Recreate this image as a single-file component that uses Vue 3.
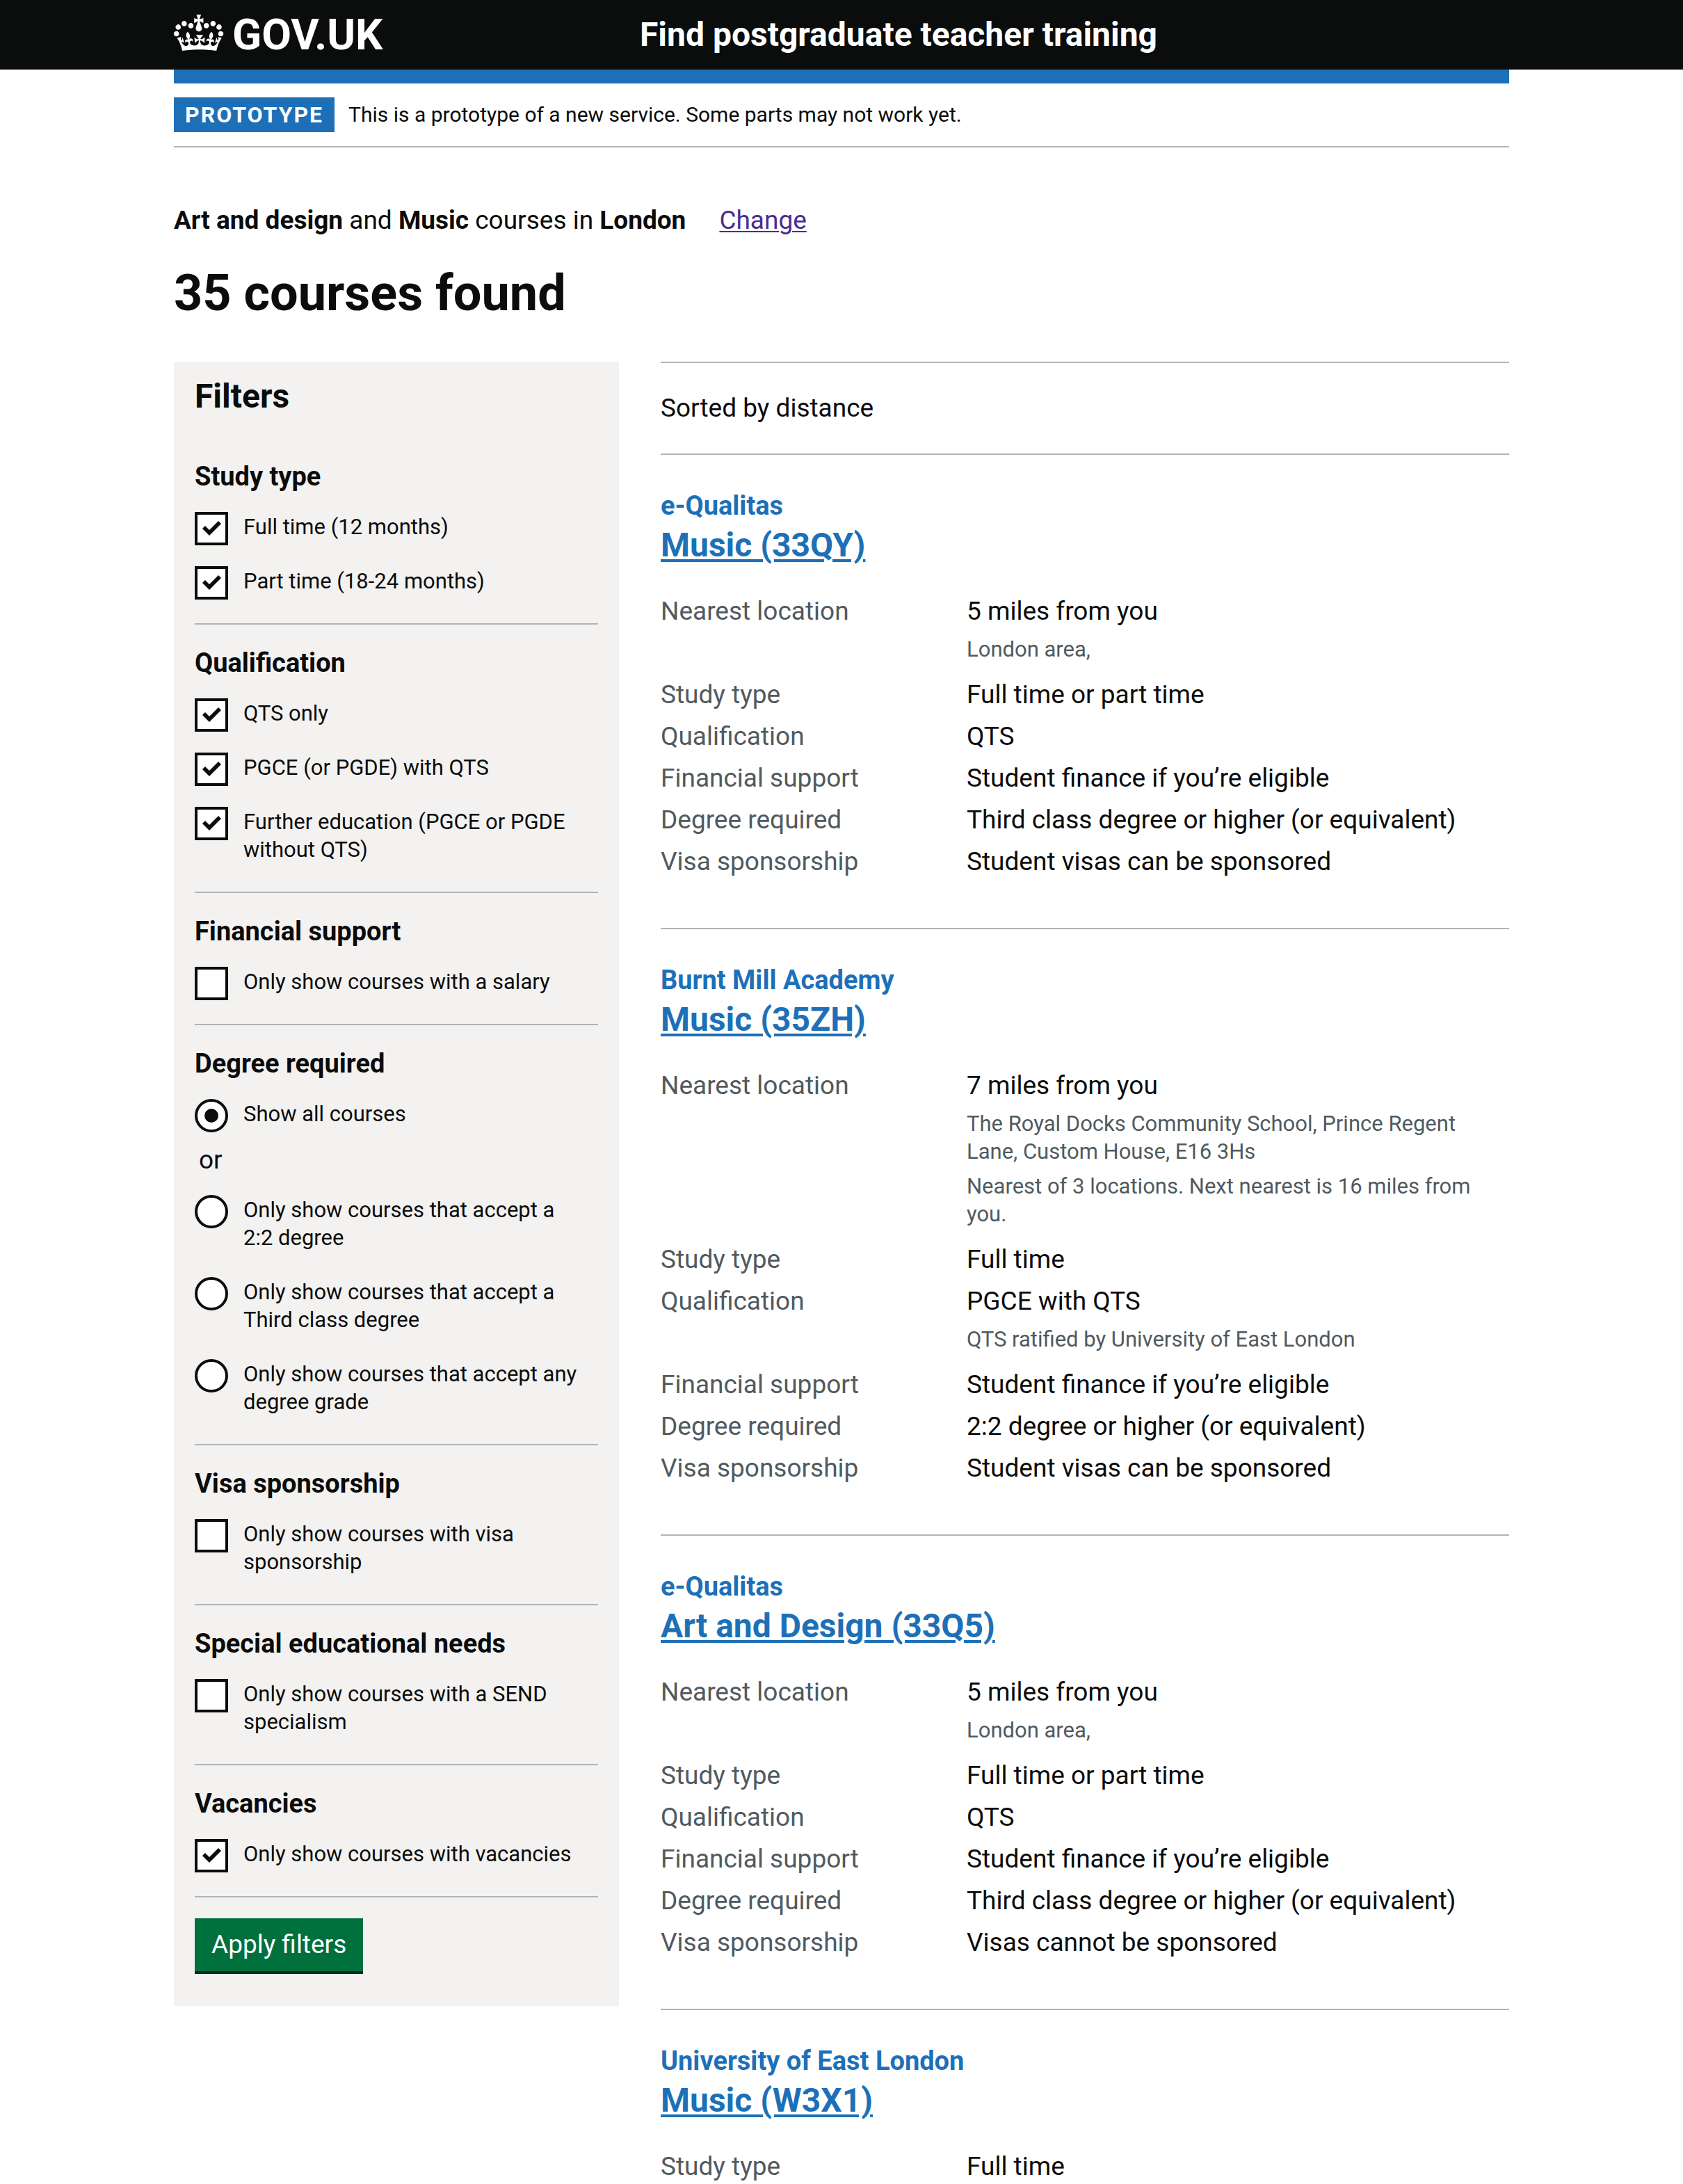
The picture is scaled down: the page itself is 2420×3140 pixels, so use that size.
<script setup>
import { reactive, ref } from 'vue'

const degree = ref('all')

const filters = reactive([
  {
    title: 'Study type',
    type: 'checkbox',
    options: [
      { id: 'full-time', label: 'Full time (12 months)', checked: true },
      { id: 'part-time', label: 'Part time (18-24 months)', checked: true }
    ]
  },
  {
    title: 'Qualification',
    type: 'checkbox',
    options: [
      { id: 'qts', label: 'QTS only', checked: true },
      { id: 'pgce', label: 'PGCE (or PGDE) with QTS', checked: true },
      { id: 'further', label: 'Further education (PGCE or PGDE without QTS)', checked: true }
    ]
  },
  {
    title: 'Financial support',
    type: 'checkbox',
    options: [{ id: 'salary', label: 'Only show courses with a salary', checked: false }]
  },
  {
    title: 'Degree required',
    type: 'radio',
    options: [
      { id: 'all', label: 'Show all courses', divider: 'or' },
      { id: 'two-two', label: 'Only show courses that accept a 2:2 degree' },
      { id: 'third', label: 'Only show courses that accept a Third class degree' },
      { id: 'any', label: 'Only show courses that accept any degree grade' }
    ]
  },
  {
    title: 'Visa sponsorship',
    type: 'checkbox',
    options: [{ id: 'visa', label: 'Only show courses with visa sponsorship', checked: false }]
  },
  {
    title: 'Special educational needs',
    type: 'checkbox',
    options: [{ id: 'send', label: 'Only show courses with a SEND specialism', checked: false }]
  },
  {
    title: 'Vacancies',
    type: 'checkbox',
    options: [{ id: 'vacancies', label: 'Only show courses with vacancies', checked: true }]
  }
])

const courses = [
  {
    provider: 'e-Qualitas',
    name: 'Music (33QY)',
    rows: [
      { key: 'Nearest location', value: '5 miles from you', hints: ['London area,'] },
      { key: 'Study type', value: 'Full time or part time' },
      { key: 'Qualification', value: 'QTS' },
      { key: 'Financial support', value: 'Student finance if you’re eligible' },
      { key: 'Degree required', value: 'Third class degree or higher (or equivalent)' },
      { key: 'Visa sponsorship', value: 'Student visas can be sponsored' }
    ]
  },
  {
    provider: 'Burnt Mill Academy',
    name: 'Music (35ZH)',
    rows: [
      {
        key: 'Nearest location',
        value: '7 miles from you',
        hints: [
          'The Royal Docks Community School, Prince Regent Lane, Custom House, E16 3Hs',
          'Nearest of 3 locations. Next nearest is 16 miles from you.'
        ]
      },
      { key: 'Study type', value: 'Full time' },
      { key: 'Qualification', value: 'PGCE with QTS', hints: ['QTS ratified by University of East London'] },
      { key: 'Financial support', value: 'Student finance if you’re eligible' },
      { key: 'Degree required', value: '2:2 degree or higher (or equivalent)' },
      { key: 'Visa sponsorship', value: 'Student visas can be sponsored' }
    ]
  },
  {
    provider: 'e-Qualitas',
    name: 'Art and Design (33Q5)',
    rows: [
      { key: 'Nearest location', value: '5 miles from you', hints: ['London area,'] },
      { key: 'Study type', value: 'Full time or part time' },
      { key: 'Qualification', value: 'QTS' },
      { key: 'Financial support', value: 'Student finance if you’re eligible' },
      { key: 'Degree required', value: 'Third class degree or higher (or equivalent)' },
      { key: 'Visa sponsorship', value: 'Visas cannot be sponsored' }
    ]
  },
  {
    provider: 'University of East London',
    name: 'Music (W3X1)',
    rows: [{ key: 'Study type', value: 'Full time' }]
  }
]
</script>

<template>
  <div class="page">
    <header class="header">
      <div class="container header-inner">
        <a class="logo" href="#">
          <svg class="crown" viewBox="0 0 36 32" aria-hidden="true">
            <path fill="currentColor" fill-rule="evenodd" d="M6.7 12.2c1 .4 2.1-.1 2.5-1s-.1-2.1-1-2.5c-1-.4-2.1.1-2.5 1-.4 1 0 2.1 1 2.5m-4.3 2.5c1 .4 2.1-.1 2.5-1s-.1-2.1-1-2.5c-1-.4-2.1.1-2.5 1-.5 1 0 2.1 1 2.5m-1.3 4.8c1 .4 2.1-.1 2.5-1 .4-1-.1-2.1-1-2.5-1-.4-2.1.1-2.5 1-.4 1 0 2.1 1 2.5m10.4-5.8c1 .4 2.1-.1 2.5-1s-.1-2.1-1-2.5c-1-.4-2.1.1-2.5 1s0 2.1 1 2.5m17.4-1.5c-1 .4-2.1-.1-2.5-1s.1-2.1 1-2.5c1-.4 2.1.1 2.5 1 .5 1 0 2.1-1 2.5m4.3 2.5c-1 .4-2.1-.1-2.5-1s.1-2.1 1-2.5c1-.4 2.1.1 2.5 1 .5 1 0 2.1-1 2.5m1.3 4.8c-1 .4-2.1-.1-2.5-1-.4-1 .1-2.1 1-2.5 1-.4 2.1.1 2.5 1s0 2.1-1 2.5m-10.4-5.8c-1 .4-2.1-.1-2.5-1s.1-2.1 1-2.5c1-.4 2.1.1 2.5 1s0 2.1-1 2.5m-5.3-4.9l2.4 1.3V6.5l-2.4.8c-.1-.1-.1-.2-.2-.3s1-3 1-3h-3.4l1 3c-.1.1-.2.2-.2.3-.1.1-2.4-.8-2.4-.8v3.6L17 8.8c.1.1.2.2.2.3l-1.4 4.2c-.1.2-.1.4-.1.6 0 1.1.8 2 1.9 2.2h.7c1-.2 1.9-1.1 1.9-2.1 0-.2 0-.4-.1-.6l-1.4-4.2c-.1-.2 0-.3.1-.4m-1 20.3c4.6 0 8.9.3 12.8.9 1.1-4.6 2.4-7.2 3.8-9.1l-2.6-.9c.3 1.3.3 1.9 0 2.7-.4-.4-.8-1.1-1.1-2.3l-1.2 4c.7-.5 1.3-.8 2-.9-1.1 2.5-2.6 3.1-3.5 3-1.1-.2-1.7-1.2-1.5-2.1.3-1.2 1.5-1.5 2.1-.1 1.1-2.3-.8-3-2-2.3 1.9-1.9 2.1-3.5.6-5.6-2.1 1.6-2.1 3.2-1.2 5.5-1.2-1.4-3.2-.6-2.5 1.6.9-1.4 2.1-.5 1.9.8-.2 1.1-1.7 2.1-3.5 1.9-2.7-.2-2.9-2.1-2.9-3.6.7-.1 1.9.5 2.9 1.9l.4-4.3c-1.1 1.1-2.1 1.4-3.2 1.4.4-1.2 2.1-3 2.1-3h-5.4s1.7 1.9 2.1 3c-1.1 0-2.1-.2-3.2-1.4l.4 4.3c1-1.4 2.2-2 2.9-1.9-.1 1.5-.2 3.4-2.9 3.6-1.9.2-3.4-.8-3.5-1.9-.2-1.3 1-2.2 1.9-.8.7-2.3-1.2-3-2.5-1.6.9-2.2.9-3.9-1.2-5.5-1.5 2-1.3 3.7.6 5.6-1.2-.7-3.1 0-2 2.3.6-1.4 1.8-1.1 2.1.1.2.9-.3 1.9-1.5 2.1-.9.2-2.4-.5-3.5-3 .6 0 1.2.3 2 .9l-1.2-4c-.3 1.1-.7 1.9-1.1 2.3-.3-.8-.2-1.4 0-2.7l-2.9.9c1.4 1.9 2.6 4.5 3.8 9.1 3.9-.6 8.2-.9 12.8-.9" />
          </svg>
          <span>GOV.UK</span>
        </a>
        <a class="service" href="#">Find postgraduate teacher training</a>
      </div>
    </header>

    <div class="container">
      <div class="phase">
        <strong class="tag">PROTOTYPE</strong>
        <span>This is a prototype of a new service. Some parts may not work yet.</span>
      </div>

      <main>
        <p class="search">
          <span><strong>Art and design</strong> and <strong>Music</strong> courses in <strong>London</strong></span>
          <a class="change" href="#">Change</a>
        </p>
        <h1 class="title">35 courses found</h1>

        <div class="columns">
          <form class="filters" @submit.prevent>
            <h2 class="filters-title">Filters</h2>
            <fieldset v-for="group in filters" :key="group.title" class="group">
              <legend class="legend">{{ group.title }}</legend>
              <div class="options">
                <template v-for="option in group.options" :key="option.id">
                  <div class="option">
                    <input
                      v-if="group.type === 'checkbox'"
                      :id="option.id"
                      v-model="option.checked"
                      class="control checkbox"
                      type="checkbox"
                    />
                    <input
                      v-else
                      :id="option.id"
                      v-model="degree"
                      class="control radio"
                      type="radio"
                      name="degree"
                      :value="option.id"
                    />
                    <label class="label" :for="option.id">{{ option.label }}</label>
                  </div>
                  <div v-if="option.divider" class="divider">{{ option.divider }}</div>
                </template>
              </div>
            </fieldset>
            <button class="apply" type="submit">Apply filters</button>
          </form>

          <section class="results">
            <p class="sorted">Sorted by distance</p>
            <article v-for="course in courses" :key="course.name" class="course">
              <h2 class="course-heading">
                <span class="provider">{{ course.provider }}</span>
                <a class="course-link" href="#">{{ course.name }}</a>
              </h2>
              <dl class="details">
                <div v-for="row in course.rows" :key="row.key" class="row">
                  <dt>{{ row.key }}</dt>
                  <dd :class="{ hinted: row.hints }">
                    {{ row.value }}
                    <span v-for="hint in row.hints" :key="hint" class="hint">{{ hint }}</span>
                  </dd>
                </div>
              </dl>
            </article>
          </section>
        </div>
      </main>
    </div>
  </div>
</template>

<style>
body {
  margin: 0;
  background: #ffffff;
}
</style>

<style scoped>
.page {
  color: #0b0c0c;
  font-family: Roboto, "Liberation Sans", sans-serif;
  font-size: 37px;
  line-height: 50px;
}

.container {
  width: min(1920px, 100% - 60px);
  margin: 0 auto;
}

.header {
  background: #0b0c0c;
  color: #ffffff;
}

.header-inner {
  display: grid;
  grid-template-columns: 670px 1fr;
  align-items: center;
  min-height: 100px;
}

.header a {
  color: inherit;
  font-weight: 700;
  text-decoration: none;
}

.logo {
  display: flex;
  align-items: center;
  gap: 12px;
  font-size: 62px;
  line-height: 60px;
}

.crown {
  width: 72px;
  height: 64px;
  margin-bottom: 10px;
}

.service {
  font-size: 48px;
  line-height: 60px;
}

.phase {
  display: flex;
  align-items: center;
  gap: 20px;
  padding: 20px 0;
  border-top: 20px solid #1d70b8;
  border-bottom: 2px solid #b1b4b6;
  font-size: 30px;
}

.tag {
  padding: 0 16px;
  background: #1d70b8;
  color: #ffffff;
  font-size: 32px;
  letter-spacing: 2px;
}

.search {
  display: flex;
  gap: 48px;
  margin: 80px 0 40px;
}

.change {
  color: #4c2c92;
  text-decoration-thickness: 2px;
  text-underline-offset: 3px;
}

.title {
  margin: 0 0 58px;
  font-size: 72px;
  line-height: 80px;
}

.columns {
  display: grid;
  grid-template-columns: 640px 1fr;
  align-items: start;
  gap: 60px;
}

.filters {
  padding: 20px 30px 50px;
  background: #f3f2f1;
}

.filters-title {
  margin: 0 0 30px;
  font-size: 48px;
  line-height: 60px;
}

.group {
  min-width: 0;
  margin: 0;
  padding: 0 0 34px;
  border: 0;
  border-bottom: 2px solid #b1b4b6;
}

.legend {
  padding: 30px 0 26px;
  font-size: 38px;
  font-weight: 700;
}

.options {
  display: flex;
  flex-direction: column;
  gap: 30px;
}

.option {
  display: flex;
  align-items: flex-start;
  gap: 22px;
}

.control {
  display: grid;
  flex: none;
  place-items: center;
  box-sizing: border-box;
  width: 48px;
  height: 48px;
  margin: 0;
  border: 4px solid #0b0c0c;
  background: #ffffff;
  appearance: none;
}

.radio {
  border-radius: 50%;
}

.checkbox:checked::before {
  width: 40px;
  height: 40px;
  background: #0b0c0c;
  clip-path: polygon(7px 20px, 11px 16px, 17px 22px, 30px 9px, 34px 13px, 17px 30px);
  content: "";
}

.radio:checked::before {
  width: 20px;
  height: 20px;
  border-radius: 50%;
  background: #0b0c0c;
  content: "";
}

.label {
  padding: 2px 20px 6px 0;
  font-size: 31px;
  line-height: 40px;
}

.divider {
  margin-top: -10px;
  padding-left: 6px;
  line-height: 40px;
}

.apply {
  display: block;
  margin-top: 30px;
  padding: 13px 24px;
  border: 0;
  background: #00703c;
  box-shadow: 0 4px 0 #002d18;
  color: #ffffff;
  font: inherit;
}

.sorted {
  margin: 0;
  padding: 40px 0;
  border-top: 2px solid #b1b4b6;
}

.course {
  padding: 48px 0 70px;
  border-top: 2px solid #b1b4b6;
}

.course:last-child {
  padding-bottom: 0;
}

.course-heading {
  margin: 0 0 38px;
  color: #1d70b8;
  font-size: 48px;
  line-height: 64px;
}

.provider {
  display: block;
  font-size: 38px;
  line-height: 50px;
}

.course-link {
  display: block;
  width: fit-content;
  color: inherit;
  text-decoration-thickness: 4px;
  text-underline-offset: 4px;
}

.details {
  display: flex;
  flex-direction: column;
  gap: 10px;
  margin: 0;
}

.row {
  display: grid;
  grid-template-columns: 440px 1fr;
}

.row dt,
.hint {
  color: #505a5f;
}

.row dd {
  margin: 0;
  padding-right: 40px;
}

.row .hinted {
  padding-bottom: 10px;
}

.hint {
  display: block;
  margin-top: 10px;
  font-size: 31px;
  line-height: 40px;
}
</style>
